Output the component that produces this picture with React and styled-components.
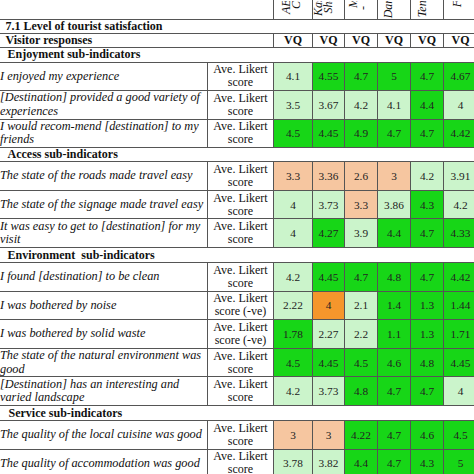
import React from 'react';
import styled, { createGlobalStyle } from 'styled-components';

const GlobalStyle = createGlobalStyle`
  html, body {
    margin: 0;
    padding: 0;
    background: #fff;
    overflow: hidden;
  }
  body {
    font-family: 'Liberation Serif', 'Times New Roman', serif;
    color: #111;
  }
`;

const tones = {
  G: '#17d617',
  L: '#cbf4cb',
  P: '#f6c6a0',
  O: '#f5962c',
};

const Page = styled.div`
  width: 474px;
  height: 474px;
  overflow: hidden;
`;

const Table = styled.table`
  border-collapse: collapse;
  table-layout: fixed;
  width: 481px;
  margin-left: -4px;
  font-family: 'Liberation Serif', 'Times New Roman', serif;
`;

const Row = styled.tr`
  height: ${(p) => p.$h}px;
`;

const HeadCell = styled.td`
  padding: 0;
  height: 18px;
  border-bottom: 1px solid #555;
  border-left: 1px solid #555;
  vertical-align: bottom;
  overflow: hidden;
`;

const HeadBlank = styled.td`
  padding: 0;
  border-bottom: 1px solid #555;
`;

const HeadInner = styled.div`
  height: 18px;
  display: flex;
  align-items: flex-end;
  gap: 1px;
  padding-left: ${(p) => p.$pad}px;
  overflow: hidden;
`;

const RotLine = styled.span`
  writing-mode: vertical-rl;
  transform: rotate(180deg);
  font-style: italic;
  font-size: 12px;
  line-height: 9px;
  white-space: nowrap;
  margin-bottom: ${(p) => p.$off}px;
`;

const TitleCell = styled.td`
  padding: 0 0 0 9px;
  font-weight: bold;
  font-size: 12px;
  line-height: 13px;
  white-space: nowrap;
  border-top: 1px solid #555;
  border-bottom: 1px solid #555;
`;

const SectionCell = styled.td`
  padding: 0 0 0 ${(p) => p.$indent}px;
  font-weight: bold;
  font-size: 12px;
  line-height: 13px;
  white-space: pre;
`;

const VqCell = styled.td`
  padding: 0;
  text-align: center;
  font-weight: bold;
  font-size: 12px;
  line-height: 13px;
  border: 1px solid #555;
`;

const LabelCell = styled.td`
  padding: 0 0 0 3px;
  font-style: italic;
  font-size: 12.3px;
  line-height: 13.5px;
  white-space: nowrap;
  overflow: hidden;
  border: 1px solid #555;
`;

const UnitCell = styled.td`
  padding: 0;
  text-align: center;
  font-size: 12px;
  line-height: 13px;
  white-space: nowrap;
  border: 1px solid #555;
  background: #fff;
`;

const ValueCell = styled.td`
  padding: 0;
  text-align: center;
  font-size: 11.3px;
  color: #222;
  border: 1px solid #555;
  background: ${(p) => tones[p.$tone]};
`;

const columns = [
  { pad: 8, lines: [['AE Cape', 5], ['Coast', 9]] },
  { pad: 1, lines: [['Kasane', 3], ['Shore', 5]] },
  { pad: 4, lines: [['Mapungu', 11], ['-', 9]] },
  { pad: 6, lines: [['Dana Bay', 0]] },
  { pad: 7, lines: [['Tenby', 1]] },
  { pad: 9, lines: [['Fish River', 11]] },
];

const widths = [211, 66, 39, 32, 33, 33, 33, 34];

const ave = ['Ave. Likert', 'score'];
const aveNeg = ['Ave. Likert', 'score (-ve)'];

const sections = [
  {
    title: 'Enjoyment sub-indicators',
    indent: 11,
    h: 15,
    rows: [
      { label: ['I enjoyed my experience'], unit: ave, values: ['4.1 L', '4.55 G', '4.7 G', '5 G', '4.7 G', '4.67 G'] },
      { label: ['[Destination] provided a good variety of', 'experiences'], unit: ave, values: ['3.5 L', '3.67 L', '4.2 L', '4.1 L', '4.4 G', '4 L'] },
      { label: ['I would recom-mend [destination] to my', 'friends'], unit: ave, values: ['4.5 G', '4.45 G', '4.9 G', '4.7 G', '4.7 G', '4.42 G'] },
    ],
  },
  {
    title: 'Access sub-indicators',
    indent: 11,
    h: 14,
    rows: [
      { label: ['The state of the roads made travel easy'], unit: ave, values: ['3.3 P', '3.36 P', '2.6 P', '3 P', '4.2 L', '3.91 L'] },
      { label: ['The state of the signage made travel easy'], unit: ave, values: ['4 L', '3.73 L', '3.3 P', '3.86 L', '4.3 G', '4.2 L'] },
      { label: ['It was easy to get to [destination] for my', 'visit'], unit: ave, values: ['4 L', '4.27 G', '3.9 L', '4.4 G', '4.7 G', '4.33 G'] },
    ],
  },
  {
    title: 'Environment  sub-indicators',
    indent: 11,
    h: 15,
    rows: [
      { label: ['I found [destination] to be clean'], unit: ave, values: ['4.2 L', '4.45 G', '4.7 G', '4.8 G', '4.7 G', '4.42 G'] },
      { label: ['I was bothered by noise'], unit: aveNeg, values: ['2.22 L', '4 O', '2.1 L', '1.4 G', '1.3 G', '1.44 G'] },
      { label: ['I was bothered by solid waste'], unit: aveNeg, values: ['1.78 G', '2.27 L', '2.2 L', '1.1 G', '1.3 G', '1.71 G'] },
      { label: ['The state of the natural environment was', 'good'], unit: ave, values: ['4.5 G', '4.45 G', '4.5 G', '4.6 G', '4.8 G', '4.45 G'] },
      { label: ['[Destination] has an interesting and', 'varied landscape'], unit: ave, values: ['4.2 L', '3.73 L', '4.8 G', '4.7 G', '4.7 G', '4 L'] },
    ],
  },
  {
    title: 'Service sub-indicators',
    indent: 12,
    h: 15,
    rows: [
      { label: ['The quality of the local cuisine was good'], unit: ave, values: ['3 P', '3 P', '4.22 G', '4.7 G', '4.6 G', '4.5 G'] },
      { label: ['The quality of accommodation was good'], unit: ave, values: ['3.78 L', '3.82 L', '4.4 G', '4.7 G', '4.3 G', '5 G'] },
    ],
  },
];

const Lines = ({ lines }) =>
  lines.map((l, i) => (
    <React.Fragment key={i}>
      {i > 0 && <br />}
      {l}
    </React.Fragment>
  ));

export default function App() {
  return (
    <Page>
      <GlobalStyle />
      <Table>
        <colgroup>
          {widths.map((w, i) => (
            <col key={i} style={{ width: w }} />
          ))}
        </colgroup>
        <tbody>
          <Row $h={19}>
            <HeadBlank colSpan={2} />
            {columns.map((c, i) => (
              <HeadCell key={i}>
                <HeadInner $pad={c.pad}>
                  {c.lines.map(([t, off], j) => (
                    <RotLine key={j} $off={off}>{t}</RotLine>
                  ))}
                </HeadInner>
              </HeadCell>
            ))}
          </Row>
          <Row $h={14}>
            <TitleCell colSpan={8}>7.1 Level of tourist satisfaction</TitleCell>
          </Row>
          <Row $h={14}>
            <TitleCell colSpan={2}>Visitor responses</TitleCell>
            {columns.map((_, i) => (
              <VqCell key={i}>VQ</VqCell>
            ))}
          </Row>
          {sections.map((s) => (
            <React.Fragment key={s.title}>
              <Row $h={s.h}>
                <SectionCell colSpan={8} $indent={s.indent}>{s.title}</SectionCell>
              </Row>
              {s.rows.map((r, i) => (
                <Row key={i} $h={28.6}>
                  <LabelCell><Lines lines={r.label} /></LabelCell>
                  <UnitCell><Lines lines={r.unit} /></UnitCell>
                  {r.values.map((v, j) => {
                    const [num, tone] = v.split(' ');
                    return (
                      <ValueCell key={j} $tone={tone}>{num}</ValueCell>
                    );
                  })}
                </Row>
              ))}
            </React.Fragment>
          ))}
        </tbody>
      </Table>
    </Page>
  );
}
